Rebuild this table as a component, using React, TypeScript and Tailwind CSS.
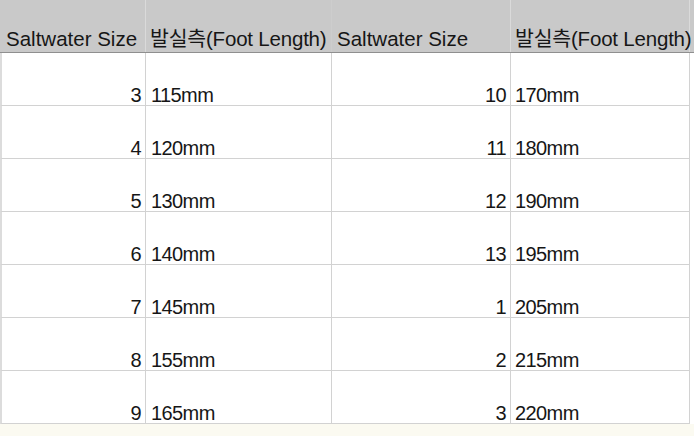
import React from "react";

const rows: [string, string, string, string][] = [
  ["3", "115mm", "10", "170mm"],
  ["4", "120mm", "11", "180mm"],
  ["5", "130mm", "12", "190mm"],
  ["6", "140mm", "13", "195mm"],
  ["7", "145mm", "1", "205mm"],
  ["8", "155mm", "2", "215mm"],
  ["9", "165mm", "3", "220mm"],
];

const font = { fontFamily: '"Liberation Sans", Arial, "Noto Sans CJK KR", sans-serif' };

export default function App() {
  return (
    <div className="w-[694px] h-[436px] bg-white overflow-hidden flex flex-col text-[#161616]" style={font}>
      <div className="flex h-[53px] bg-[#c9c9c9] border-b border-[#8f8f8f] text-[20.5px] leading-[24px]">
        <div className="w-[146px] flex items-end pl-[6px] pb-[1px] border-r border-[#dadada]">Saltwater Size</div>
        <div className="w-[186px] flex items-end pl-[4px] pb-[1px] border-r border-[#cdcdcd] whitespace-nowrap tracking-[-0.2px]">발실측(Foot Length)</div>
        <div className="w-[179px] flex items-end pl-[5px] pb-[1px] border-r border-[#dadada]">Saltwater Size</div>
        <div className="w-[179px] flex items-end pl-[4px] pb-[1px] border-r border-[#dadada] whitespace-nowrap tracking-[-0.2px]">발실측(Foot Length)</div>
        <div className="flex-1" />
      </div>
      {rows.map((r, i) => (
        <div key={i} className="flex h-[53px] text-[20px] leading-[18px] tracking-[-0.6px]">
          <div className="w-[146px] flex items-end justify-end pr-[4px] pb-[1px] border-l-2 border-l-[#dcdcdc] border-r border-b border-[#d2d2d2]">{r[0]}</div>
          <div className="w-[186px] flex items-end pl-[5px] pb-[1px] border-r border-b border-[#d2d2d2]">{r[1]}</div>
          <div className="w-[179px] flex items-end justify-end pr-[4px] pb-[1px] border-r border-b border-[#d2d2d2]">{r[2]}</div>
          <div className="w-[179px] flex items-end pl-[4px] pb-[1px] border-r border-b border-[#d2d2d2]">{r[3]}</div>
          <div className="flex-1" />
        </div>
      ))}
      <div className="flex-1 bg-[#fbfaf1]" />
    </div>
  );
}
